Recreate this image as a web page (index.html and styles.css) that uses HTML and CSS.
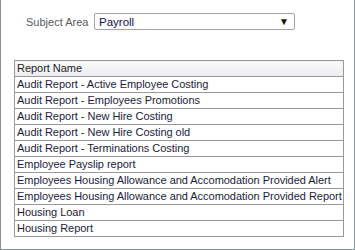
FILE: index.html
```html
<!DOCTYPE html>
<html lang="en">
<head>
  <meta charset="UTF-8">
  <title>Reports</title>
  <link rel="stylesheet" href="styles.css">
</head>
<body>
  <div class="panel">
    <div class="filter">
      <span class="label">Subject Area</span>
      <div class="select">
        <span>Payroll</span>
        <span class="arrow">&#9660;</span>
      </div>
    </div>

    <table class="reports">
      <thead>
        <tr><th>Report Name</th></tr>
      </thead>
      <tbody>
        <tr><td>Audit Report - Active Employee Costing</td></tr>
        <tr><td>Audit Report - Employees Promotions</td></tr>
        <tr><td>Audit Report - New Hire Costing</td></tr>
        <tr><td>Audit Report - New Hire Costing old</td></tr>
        <tr><td>Audit Report - Terminations Costing</td></tr>
        <tr><td>Employee Payslip report</td></tr>
        <tr><td>Employees Housing Allowance and Accomodation Provided Alert</td></tr>
        <tr><td>Employees Housing Allowance and Accomodation Provided Report</td></tr>
        <tr><td>Housing Loan</td></tr>
        <tr><td>Housing Report</td></tr>
      </tbody>
    </table>
  </div>
</body>
</html>
```

FILE: styles.css
```css
body {
  margin: 0;
  font-family: "Liberation Sans", Arial, sans-serif;
  font-size: 11px;
  color: #1c1c3c;
}

.panel {
  box-sizing: border-box;
  width: 355px;
  height: 250px;
  border: 1px solid #849494;
  border-top: none;
  padding: 13px 13px 0 13px;
  background: #fff;
}

.filter {
  display: flex;
  align-items: center;
  gap: 8px;
  padding-left: 12px;
  height: 17px;
}

.label {
  width: 60px;
  white-space: nowrap;
  color: #5a5a5a;
}

.select {
  box-sizing: border-box;
  width: 201px;
  height: 17px;
  border: 1px solid #a3a3a3;
  border-radius: 2px;
  display: flex;
  align-items: center;
  justify-content: space-between;
  padding: 0 5px 0 4px;
  font-size: 11.5px;
  color: #10104a;
}

.select .arrow {
  font-size: 10px;
  color: #111;
}

.reports {
  margin-top: 30px;
  width: 327px;
  border-collapse: collapse;
}

.reports th,
.reports td {
  border: 1px solid #9a9a9a;
  height: 15px;
  padding: 0 1px 0 2px;
  text-align: left;
  font-weight: normal;
  white-space: nowrap;
  line-height: 15px;
  letter-spacing: -0.03px;
}

.reports th {
  background: linear-gradient(#fafafc, #ececf0);
  color: #222;
}
```
